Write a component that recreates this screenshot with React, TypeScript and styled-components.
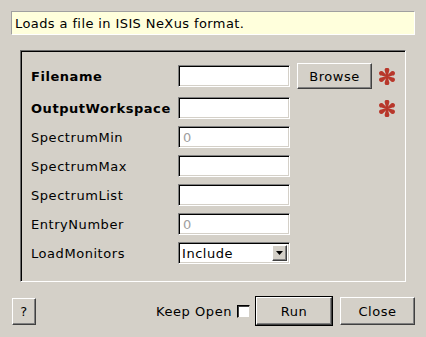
import React from "react";
import styled, { createGlobalStyle } from "styled-components";

const Global = createGlobalStyle`
  html, body { margin: 0; padding: 0; background: #d4d0c8; }
  body { font-family: "DejaVu Sans", "Liberation Sans", sans-serif; font-size: 13px; letter-spacing: 0.55px; color: #000; }
  * { box-sizing: border-box; }
`;

const Dialog = styled.div`
  width: 426px;
  height: 337px;
  padding: 11px 11px 0 11px;
  display: flex;
  flex-direction: column;
`;

const Description = styled.div`
  height: 24px;
  width: 404px;
  background: #ffffdc;
  border: 1px solid;
  border-color: #a0a0a0 #ffffff #ffffff #a0a0a0;
  padding-left: 3px;
  display: flex;
  align-items: center;
  white-space: nowrap;
  letter-spacing: 0.4px;
`;

const Frame = styled.div`
  margin: 15px 0 0 9px;
  width: 386px;
  height: 232px;
  border: 1px solid;
  border-color: #6a6a6a #ffffff #ffffff #6a6a6a;
  box-shadow: inset 1px 1px 0 #000;
  padding: 12px 0 0 10px;
`;

const Grid = styled.div`
  display: grid;
  grid-template-columns: 140px 112px 75px 16px;
  grid-template-rows: 27px repeat(6, 22px);
  column-gap: 7px;
  row-gap: 7px;
`;

const Label = styled.div<{ $bold?: boolean }>`
  grid-column: 1;
  align-self: center;
  font-weight: ${(p) => (p.$bold ? "bold" : "normal")};
  white-space: nowrap;
`;

const Field = styled.div<{ $top?: number }>`
  grid-column: 2;
  align-self: start;
  margin-top: ${(p) => p.$top ?? 0}px;
  height: 22px;
  background: #fff;
  border: 1px solid;
  border-color: #808080 #ffffff #ffffff #808080;
  box-shadow: inset 1px 1px 0 #000, inset -1px -1px 0 #d4d0c8;
  padding-left: 4px;
  display: flex;
  align-items: center;
  color: #a0a0a0;
`;

const Combo = styled.div`
  grid-column: 2;
  height: 22px;
  background: #fff;
  border: 1px solid;
  border-color: #808080 #ffffff #ffffff #808080;
  box-shadow: inset 1px 1px 0 #000, inset -1px -1px 0 #d4d0c8;
  display: flex;
  align-items: stretch;
  padding: 2px;
`;

const ComboText = styled.div`
  flex: 1;
  display: flex;
  align-items: center;
  padding-left: 1px;
`;

const ComboArrow = styled.div`
  width: 15px;
  background: #d4d0c8;
  border: 1px solid;
  border-color: #ffffff #404040 #404040 #ffffff;
  box-shadow: inset -1px -1px 0 #808080;
  display: flex;
  align-items: center;
  justify-content: center;
`;

const Button = styled.button<{ $default?: boolean }>`
  font: inherit;
  letter-spacing: inherit;
  color: #000;
  background: #d4d0c8;
  padding: 0;
  margin: 0;
  border: 1px solid;
  border-color: #ffffff #404040 #404040 #ffffff;
  box-shadow: ${(p) =>
    p.$default
      ? "0 0 0 1px #000, inset -1px -1px 0 #808080"
      : "inset -1px -1px 0 #808080"};
`;

const BrowseButton = styled(Button)`
  grid-column: 3;
  align-self: start;
  height: 26px;
`;

const Star = styled.svg`
  grid-column: 4;
  align-self: center;
  width: 16px;
  height: 17px;
`;

const Bottom = styled.div`
  margin-top: 15px;
  display: flex;
  align-items: center;
  padding-left: 1px;
  height: 28px;
`;

const HelpButton = styled(Button)`
  width: 24px;
  height: 27px;
  margin-right: auto;
`;

const KeepOpen = styled.label`
  display: flex;
  align-items: center;
  white-space: nowrap;
`;

const Check = styled.span`
  width: 13px;
  height: 13px;
  margin-left: 5px;
  background: #fff;
  border: 1px solid;
  border-color: #000 #d4d0c8 #d4d0c8 #000;
  box-shadow: inset 1px 1px 0 #404040;
`;

const ActionButton = styled(Button)<{ $w: number; $gap: number }>`
  width: ${(p) => p.$w}px;
  height: 28px;
  margin-left: ${(p) => p.$gap}px;
`;

const Asterisk = () => (
  <Star viewBox="-8 -8.5 16 17">
    {[0, 60, 120, 180, 240, 300].map((a) => (
      <path
        key={a}
        d="M -0.7 0 L -2.1 -5.4 A 2.35 2.35 0 1 1 2.1 -5.4 L 0.7 0 Z"
        fill="#b8372b"
        transform={`rotate(${a})`}
      />
    ))}
  </Star>
);

const rows: { label: string; value?: string }[] = [
  { label: "SpectrumMin", value: "0" },
  { label: "SpectrumMax" },
  { label: "SpectrumList" },
  { label: "EntryNumber", value: "0" },
];

export default function App() {
  return (
    <>
      <Global />
      <Dialog>
        <Description>Loads a file in ISIS NeXus format.</Description>
        <Frame>
          <Grid>
            <Label $bold>Filename</Label>
            <Field $top={2} />
            <BrowseButton>Browse</BrowseButton>
            <Asterisk />

            <Label $bold>OutputWorkspace</Label>
            <Field />
            <span />
            <Asterisk />

            {rows.map((r) => (
              <React.Fragment key={r.label}>
                <Label>{r.label}</Label>
                <Field>{r.value}</Field>
              </React.Fragment>
            ))}

            <Label>LoadMonitors</Label>
            <Combo>
              <ComboText>Include</ComboText>
              <ComboArrow>
                <svg width="7" height="4" viewBox="0 0 7 4">
                  <polygon points="0,0 7,0 3.5,4" fill="#000" />
                </svg>
              </ComboArrow>
            </Combo>
          </Grid>
        </Frame>
        <Bottom>
          <HelpButton>?</HelpButton>
          <KeepOpen>
            Keep Open
            <Check />
          </KeepOpen>
          <ActionButton $w={76} $gap={6} $default>Run</ActionButton>
          <ActionButton $w={75} $gap={8}>Close</ActionButton>
        </Bottom>
      </Dialog>
    </>
  );
}
